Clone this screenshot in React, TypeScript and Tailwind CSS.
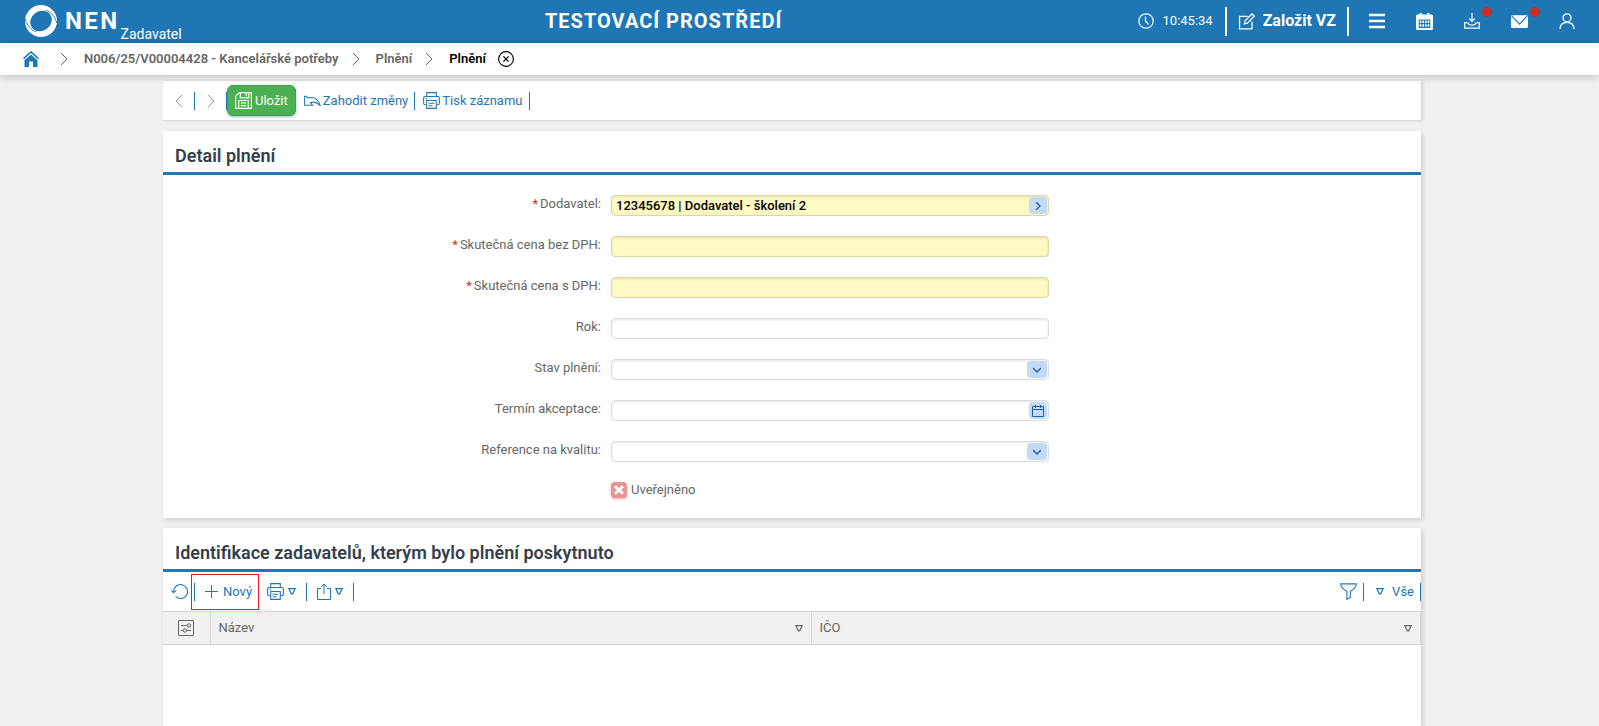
import type { ReactNode } from "react";

type IconProps = { className?: string };

function Logo() {
  return (
    <svg viewBox="0 0 32 32" className="size-8 shrink-0" aria-hidden="true">
      <circle cx="16" cy="16" r="16" fill="#fff" />
      <ellipse cx="16" cy="16" rx="11.2" ry="9.8" transform="rotate(-35 16 16)" fill="#1e76b5" />
      <path d="M21 5.2C26 7 30 11.5 31.8 18" fill="none" stroke="#1e76b5" strokeWidth=".9" />
      <path d="M11 26.8C6 25 2 20.5 .2 14" fill="none" stroke="#1e76b5" strokeWidth=".9" />
    </svg>
  );
}

function Svg({ className = "size-4", children, stroke = 1 }: IconProps & { children: ReactNode; stroke?: number }) {
  return (
    <svg
      viewBox="0 0 16 16"
      className={`${className} shrink-0`}
      fill="none"
      stroke="currentColor"
      strokeWidth={stroke}
      aria-hidden="true"
    >
      {children}
    </svg>
  );
}

const ClockIcon = () => (
  <Svg stroke={1.2}>
    <circle cx="8" cy="8" r="7.2" />
    <path d="M7.5 3.5V8L10.5 11.5" />
  </Svg>
);

const EditIcon = () => (
  <Svg className="size-[17px]" stroke={1.2}>
    <path d="M9 3.2H1.5V15H13.2V8" />
    <path d="M6 10.3L6.6 7.4L13.2 0.9L15.3 2.9L8.8 9.6Z" />
  </Svg>
);

const MenuIcon = () => (
  <Svg stroke={2.4}>
    <path d="M0 2H16M0 8H16M0 14H16" />
  </Svg>
);

const CalendarSolidIcon = () => (
  <Svg className="size-[17px]">
    <path d="M1.5 1.8H14.5Q15.5 1.8 15.5 2.8V14.5Q15.5 15.5 14.5 15.5H1.5Q.5 15.5 .5 14.5V2.8Q.5 1.8 1.5 1.8Z" fill="currentColor" />
    <path d="M4.5 0V3M11.5 0V3" strokeWidth="2" />
    <path d="M3 6.5H13V13.5H3ZM3 10H13M5.5 6.5V13.5M8 6.5V13.5M10.5 6.5V13.5" stroke="#1e76b5" />
  </Svg>
);

const TrayIcon = () => (
  <Svg stroke={1.2}>
    <path d="M8 0V8M5.2 5.5L8 8.3L10.8 5.5" />
    <path d="M3.5 9.6H.7V15.2H15.3V9.6H12.5Q11.2 12.3 8 12.3T3.5 9.6Z" />
  </Svg>
);

const MailIcon = () => (
  <Svg className="size-[17px]">
    <rect x="0" y="2" width="16" height="12" rx="1" fill="currentColor" stroke="none" />
    <path d="M.5 2.5L8 10.5L15.5 2.5" stroke="#1e76b5" />
  </Svg>
);

const UserIcon = () => (
  <Svg stroke={1.3}>
    <circle cx="8" cy="4.8" r="4" />
    <path d="M1 16Q1.3 9.3 8 9.3T15 16" />
  </Svg>
);

const HomeIcon = () => (
  <Svg stroke={1.6}>
    <path d="M.5 7.6L8 1L15.5 7.6" />
    <path d="M8 3.5L14.5 9.3V16H10V10.5H6V16H1.5V9.3Z" fill="currentColor" stroke="none" />
  </Svg>
);

const ChevronRight = ({ className }: IconProps) => (
  <svg viewBox="0 0 8 14" className={`h-[14px] w-2 shrink-0 ${className}`} fill="none" stroke="currentColor" aria-hidden="true">
    <path d="M1 1L7 7L1 13" />
  </svg>
);

const ChevronLeft = ({ className }: IconProps) => (
  <svg viewBox="0 0 8 14" className={`h-[14px] w-2 shrink-0 ${className}`} fill="none" stroke="currentColor" aria-hidden="true">
    <path d="M7 1L1 7L7 13" />
  </svg>
);

const CloseCircleIcon = () => (
  <Svg stroke={1.1}>
    <circle cx="8" cy="8" r="7.4" />
    <path d="M5.4 5.4L10.6 10.6M10.6 5.4L5.4 10.6" strokeWidth="1.3" />
  </Svg>
);

const SaveIcon = () => (
  <Svg className="size-[17px]" stroke={1.1}>
    <path d="M4 .6H15.4V15.4H.6V4Z" />
    <path d="M5 .6V5.5H13V.6M10.5 1V4M3.5 15.4V8H12.5V15.4M5.5 10.3H10.5M5.5 12.8H10.5" />
  </Svg>
);

const UndoIcon = () => (
  <Svg className="size-[17px]" stroke={1}>
    <path d="M.6 4H2L3.8 5.6Q12.5 3.6 15.4 13.2Q11.5 8.6 6 9.8L8 12.4H.6Z" />
  </Svg>
);

const PrinterIcon = () => (
  <Svg className="size-[17px]" stroke={1}>
    <path d="M3.5 4V.6H12.5V4M3.2 12H2Q.6 12 .6 10.6V5.6Q.6 4.2 2 4.2H14Q15.4 4.2 15.4 5.6V10.6Q15.4 12 14 12H12.8" />
    <path d="M3.5 8H12.5V15.4H3.5ZM5.3 10.6H10.7M5.3 13H9M2.5 6.2H4" />
  </Svg>
);

const ReloadIcon = () => (
  <Svg className="size-[17px]" stroke={1}>
    <path d="M2.4 8.5A6.6 6.6 0 1 1 4.3 12.7M.3 7L2.4 9.2L4.7 7" />
  </Svg>
);

const PlusIcon = () => (
  <svg viewBox="0 0 13 13" className="size-[13px] shrink-0" stroke="currentColor" aria-hidden="true">
    <path d="M6.5 0V13M0 6.5H13" />
  </svg>
);

const ShareIcon = () => (
  <svg viewBox="0 0 14 17" className="h-[17px] w-[14px] shrink-0" fill="none" stroke="currentColor" aria-hidden="true">
    <path d="M4 5.5H.5V16.5H13.5V5.5H10M7 11V1M4.2 3.8L7 1L9.8 3.8" />
  </svg>
);

const FunnelIcon = () => (
  <Svg className="size-[17px]" stroke={1}>
    <path d="M.6 .8H15.4Q15.4 4.8 9.7 7.8V13.6L6.5 15.4V7.8Q.6 4.8 .6 .8Z" />
  </Svg>
);

const TriangleIcon = () => (
  <svg viewBox="0 0 8 7" className="h-[7px] w-2 shrink-0" fill="none" stroke="currentColor" strokeWidth="1.2" aria-hidden="true">
    <path d="M.9 .7H7.1L4.7 5.8H3.3Z" />
  </svg>
);

const SettingsIcon = () => (
  <Svg stroke={1}>
    <rect x=".5" y=".5" width="15" height="15" rx=".5" />
    <path d="M3 5.5H9M3 10.5H5.2M8.8 10.5H13" />
    <circle cx="11" cy="5.5" r="1.7" />
    <circle cx="7" cy="10.5" r="1.7" />
  </Svg>
);

const DateIcon = () => (
  <svg viewBox="0 0 12 12" className="size-3" fill="none" stroke="currentColor" aria-hidden="true">
    <path d="M.5 1.5H11.5V11.5H.5ZM.5 4.5H11.5M3.5 0V3M8.5 0V3" />
  </svg>
);

const SmallChevron = ({ className = "" }: IconProps) => (
  <svg viewBox="0 0 8 8" className={`size-2 ${className}`} fill="none" stroke="currentColor" strokeWidth="1.3" aria-hidden="true">
    <path d="M0 2L4 6L8 2" />
  </svg>
);

const Divider = () => <span className="h-[18px] w-px shrink-0 bg-[#1e76b5]" />;

const Badge = () => <span className="absolute -top-[6px] -right-3 size-[10px] rounded-full bg-[#c92a2a]" />;

function Header() {
  return (
    <header className="flex h-[43px] items-center bg-[#1e76b5] pb-px text-white">
      <a href="#" className="flex h-full items-center pl-[25px]">
        <Logo />
        <span className="pr-px pl-2 text-2xl leading-6 font-bold tracking-widest">NEN</span>
        <span className="self-end text-sm leading-4">Zadavatel</span>
      </a>
      <p className="flex-1 pl-2 text-center text-xl font-bold tracking-wider">TESTOVACÍ PROSTŘEDÍ</p>
      <div className="flex items-center justify-end pr-6">
        <ClockIcon />
        <time className="pl-[9px] text-[13px]">10:45:34</time>
        <span className="ml-3 h-[29px] w-[2px] bg-white" />
        <button type="button" className="flex items-center gap-2 px-[11px] text-base font-bold whitespace-nowrap">
          <EditIcon />
          Založit VZ
        </button>
        <span className="mr-5 h-[29px] w-[2px] bg-white" />
        <nav className="flex items-center gap-[31px]">
          <button type="button" aria-label="Menu"><MenuIcon /></button>
          <button type="button" aria-label="Kalendář"><CalendarSolidIcon /></button>
          <button type="button" aria-label="Stažené soubory" className="relative"><TrayIcon /><Badge /></button>
          <button type="button" aria-label="Zprávy" className="relative"><MailIcon /><Badge /></button>
          <button type="button" aria-label="Uživatel"><UserIcon /></button>
        </nav>
      </div>
    </header>
  );
}

function Breadcrumb() {
  return (
    <nav className="relative flex h-8 items-center bg-white pl-[23px] text-[13px] font-semibold text-[#666] shadow-[0_2px_8px_rgba(0,0,0,0.2)]">
      <a href="#" aria-label="Domů" className="text-[#1e76b5]"><HomeIcon /></a>
      <ChevronRight className="mr-4 ml-[21px]" />
      <a href="#">N006/25/V00004428 - Kancelářské potřeby</a>
      <ChevronRight className="mr-4 ml-[13px]" />
      <a href="#">Plnění</a>
      <ChevronRight className="mr-4 ml-[13px]" />
      <a href="#" className="text-black">Plnění</a>
      <button type="button" aria-label="Zavřít" className="ml-3 text-black"><CloseCircleIcon /></button>
    </nav>
  );
}

function ActionBar() {
  return (
    <div className="flex h-10 items-center border-b border-[#dcdcdc] bg-white pl-3 text-[13px] text-[#1e76b5] shadow-[2px_0_3px_rgba(0,0,0,0.12)]">
      <button type="button" aria-label="Předchozí" className="mr-[11px] text-[#999]"><ChevronLeft /></button>
      <Divider />
      <button type="button" aria-label="Další" className="mr-[11px] ml-3 text-[#999]"><ChevronRight /></button>
      <Divider />
      <button
        type="button"
        className="flex h-[31px] items-center gap-[3px] rounded-md border border-[#43a047] bg-[#4caf50] px-[7px] text-white shadow-[0_1px_3px_rgba(30,118,181,0.5)]"
      >
        <SaveIcon />
        Uložit
      </button>
      <button type="button" className="flex items-center gap-[2px] pr-[6px] pl-2">
        <UndoIcon />
        Zahodit změny
      </button>
      <Divider />
      <button type="button" className="flex items-center gap-[2px] pr-[6px] pl-2">
        <PrinterIcon />
        Tisk záznamu
      </button>
      <Divider />
    </div>
  );
}

function SectionTitle({ children }: { children: ReactNode }) {
  return (
    <h2 className="border-b-3 border-[#1e76b5] px-3 pt-3 pb-[3px] text-lg leading-[26px] font-semibold text-[#343f4a]">
      {children}
    </h2>
  );
}

function Row({ id, label, required, children }: { id: string; label: string; required?: boolean; children: ReactNode }) {
  return (
    <div className="grid grid-cols-[438fr_438fr_362fr] gap-x-[10px]">
      <label htmlFor={id} className="text-right leading-[18px]">
        {required && <span className="pr-[2px] text-[#d32f2f]">*</span>}
        {label}:
      </label>
      <div className="relative flex">{children}</div>
    </div>
  );
}

const field =
  "h-[21px] w-full appearance-none rounded-sm border px-1 text-[13px] font-medium text-black outline-none shadow-[inset_0_1px_3px_rgba(0,0,0,0.1)]";
const plain = "border-[#dcdcdc] bg-white";
const mandatory = "border-[#ddd6a4] bg-[#fff9c4]";
const fieldButton =
  "absolute inset-y-[2px] right-[2px] flex items-center justify-center rounded-sm bg-[#c2daf5] text-[#1e5fa5]";

function DetailSection() {
  return (
    <section className="bg-white shadow-[2px_2px_5px_rgba(0,0,0,0.15)]">
      <SectionTitle>Detail plnění</SectionTitle>
      <form className="flex flex-col gap-5 py-5 text-[13px] text-[#666]">
        <Row id="dodavatel" label="Dodavatel" required>
          <input id="dodavatel" defaultValue="12345678 | Dodavatel - školení 2" className={`${field} ${mandatory}`} />
          <button type="button" aria-label="Otevřít dodavatele" className={`${fieldButton} w-[18px]`}>
            <SmallChevron className="-rotate-90" />
          </button>
        </Row>
        <Row id="bez-dph" label="Skutečná cena bez DPH" required>
          <input id="bez-dph" className={`${field} ${mandatory}`} />
        </Row>
        <Row id="s-dph" label="Skutečná cena s DPH" required>
          <input id="s-dph" className={`${field} ${mandatory}`} />
        </Row>
        <Row id="rok" label="Rok">
          <input id="rok" className={`${field} ${plain}`} />
        </Row>
        <Row id="stav" label="Stav plnění">
          <select id="stav" className={`${field} ${plain}`} />
          <span className={`${fieldButton} pointer-events-none w-5`}><SmallChevron /></span>
        </Row>
        <Row id="termin" label="Termín akceptace">
          <input id="termin" className={`${field} ${plain}`} />
          <button type="button" aria-label="Vybrat datum" className={`${fieldButton} w-[18px]`}><DateIcon /></button>
        </Row>
        <Row id="kvalita" label="Reference na kvalitu">
          <select id="kvalita" className={`${field} ${plain}`} />
          <span className={`${fieldButton} pointer-events-none w-5`}><SmallChevron /></span>
        </Row>
        <div className="grid grid-cols-[438fr_438fr_362fr] gap-x-[10px]">
          <label className="relative col-start-2 flex items-center gap-1 leading-4">
            <input
              type="checkbox"
              className="size-4 appearance-none rounded-sm bg-[#e59393] shadow-[0_1px_3px_rgba(211,47,47,0.4)]"
            />
            <svg viewBox="0 0 16 16" className="pointer-events-none absolute left-0 size-4" stroke="#fff" strokeWidth="2.8" aria-hidden="true">
              <path d="M4 4.2L12 11.8M12 4.2L4 11.8" />
            </svg>
            Uveřejněno
          </label>
        </div>
      </form>
    </section>
  );
}

function ListSection() {
  return (
    <section className="flex-1 bg-white shadow-[2px_2px_5px_rgba(0,0,0,0.15)]">
      <SectionTitle>Identifikace zadavatelů, kterým bylo plnění poskytnuto</SectionTitle>
      <div className="flex h-[39px] items-center pl-2 text-[13px] text-[#1e76b5]">
        <button type="button" aria-label="Obnovit" className="mr-[6px]"><ReloadIcon /></button>
        <Divider />
        <button type="button" className="relative mr-2 flex items-center gap-[5px] pr-[7px] pl-[10px] leading-5">
          <PlusIcon />
          Nový
          <span className="absolute -inset-y-2 right-0 -left-1 border border-[#ed1c24]" />
        </button>
        <button type="button" aria-label="Tisk" className="mr-[10px] flex items-center gap-1">
          <PrinterIcon />
          <TriangleIcon />
        </button>
        <Divider />
        <button type="button" aria-label="Export" className="mr-[10px] ml-[10px] flex items-center gap-1">
          <ShareIcon />
          <TriangleIcon />
        </button>
        <Divider />
        <div className="ml-auto flex items-center">
          <button type="button" aria-label="Filtr" className="mr-[6px]"><FunnelIcon /></button>
          <Divider />
          <button type="button" className="mr-[6px] ml-3 flex items-center gap-2">
            <TriangleIcon />
            Vše
          </button>
          <Divider />
        </div>
      </div>
      <table className="w-full table-fixed border-collapse text-left text-[13px] text-[#666]">
        <thead>
          <tr className="h-[33px] border-y border-[#d6d6d6] bg-[#f1f1f1]">
            <th className="w-[47px] border-r border-[#d6d6d6] p-0 font-normal">
              <button type="button" aria-label="Nastavení sloupců" className="mx-auto flex"><SettingsIcon /></button>
            </th>
            <th className="w-[47.8%] border-r border-[#d6d6d6] px-2 py-0 font-normal">
              <span className="flex items-center justify-between">Název<TriangleIcon /></span>
            </th>
            <th className="border-r border-[#d6d6d6] px-2 py-0 font-normal">
              <span className="flex items-center justify-between">IČO<TriangleIcon /></span>
            </th>
          </tr>
        </thead>
        <tbody />
      </table>
    </section>
  );
}

export default function App() {
  return (
    <div className="flex min-h-screen flex-col overflow-hidden bg-[#f1f1f1] font-['Roboto',sans-serif]">
      <Header />
      <Breadcrumb />
      <div className="flex flex-1 flex-col pr-[15px]">
        <main className="mx-auto flex w-full max-w-[1258px] flex-1 flex-col gap-[10px] pt-[6px]">
          <ActionBar />
          <DetailSection />
          <ListSection />
        </main>
      </div>
    </div>
  );
}
